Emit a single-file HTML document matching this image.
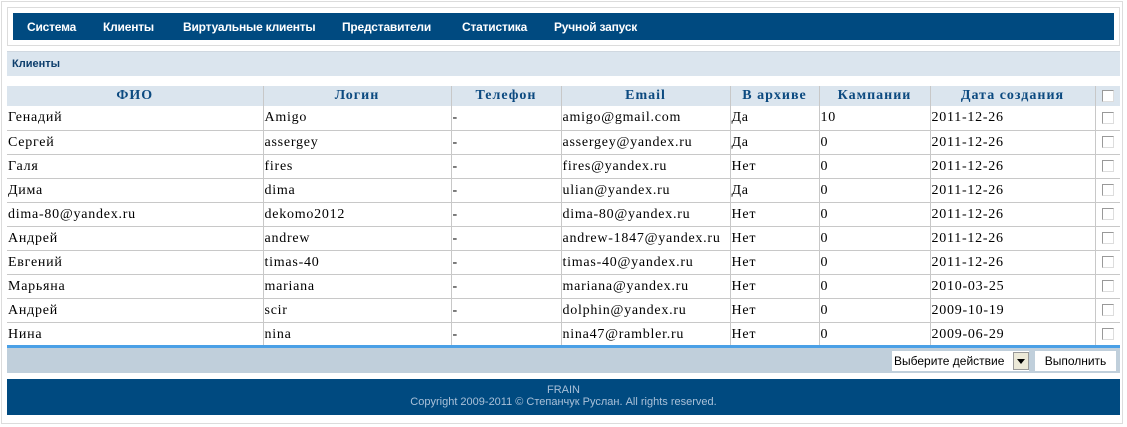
<!DOCTYPE html>
<html><head><meta charset="utf-8"><style>
*{margin:0;padding:0;box-sizing:border-box}
body{width:1127px;height:427px;background:#fff;position:relative;overflow:hidden;font-family:"Liberation Serif",serif}
.outer{position:absolute;left:1px;top:1px;width:1122px;height:423px;border:1px solid #dcdcdc}
.navbox{position:absolute;left:7px;top:7px;width:1113px;height:39px;border:1px solid #dcdcdc;background:#fff}
.nav{position:absolute;left:13px;top:13px;width:1101px;height:27px;background:#004a80}
.nav span{position:absolute;top:7px;color:#fff;font:bold 12px "Liberation Sans",sans-serif;letter-spacing:-0.2px}
.sec{position:absolute;left:7px;top:51px;width:1113px;height:25px;background:#dbe5ee;border-top:1px solid #d0d8e0}
.sec b{position:absolute;left:5px;top:6px;font:bold 11px "Liberation Sans",sans-serif;color:#0c3d6b}
table{position:absolute;left:7px;top:86px;width:1113px;border-collapse:collapse;table-layout:fixed}
th{height:20px;background:#dbe5ee;color:#0c4a80;font-weight:bold;font-size:14px;letter-spacing:1px;border-left:1px solid #c8c8c8;text-align:center;padding:0}
td{height:24px;font-size:14px;letter-spacing:0.75px;border:1px solid #c8c8c8;border-top:none;padding:1px 1px 0;white-space:nowrap;overflow:hidden;color:#000}
th:first-child,td:first-child{border-left:none}
td:last-child{border-right:none}
.cb{display:inline-block;width:12px;height:12px;border:1px solid #999;border-right-color:#ddd;border-bottom-color:#ddd;background:#fff;vertical-align:middle}
.blue{position:absolute;left:7px;top:345px;width:1113px;height:3px;background:#4aa0e6}
.gray{position:absolute;left:7px;top:348px;width:1113px;height:25px;background:#c0cfdb}
.sel{position:absolute;left:892px;top:351px;width:137px;height:20px;background:#fff;font:12px "Liberation Sans",sans-serif;padding:3px 0 0 2px}
.arr{position:absolute;right:0;top:1px;width:16px;height:18px;background:#ece9d8;border:1px solid #999}
.arr:after{content:"";position:absolute;left:3px;top:6px;border-left:4px solid transparent;border-right:4px solid transparent;border-top:5px solid #000}
.btn{position:absolute;left:1035px;top:351px;width:81px;height:20px;background:#fff;font:12px "Liberation Sans",sans-serif;text-align:center;padding-top:3px}
.foot{position:absolute;left:7px;top:379px;width:1113px;height:36px;background:#004a80;color:#a9c0d8;font:11px "Liberation Sans",sans-serif;text-align:center;line-height:12px;padding-top:5px}
</style></head><body>
<div class="outer"></div>
<div class="navbox"></div>
<div class="nav">
<span style="left:14px">Система</span><span style="left:90px">Клиенты</span><span style="left:170px">Виртуальные клиенты</span><span style="left:329px">Представители</span><span style="left:449px">Статистика</span><span style="left:541px">Ручной запуск</span>
</div>
<div class="sec"><b>Клиенты</b></div>
<table>
<colgroup><col style="width:256px"><col style="width:188px"><col style="width:110px"><col style="width:169px"><col style="width:89px"><col style="width:111px"><col style="width:165px"><col style="width:25px"></colgroup>
<tr><th>ФИО</th><th>Логин</th><th>Телефон</th><th>Email</th><th>В архиве</th><th>Кампании</th><th>Дата создания</th><th><span class="cb"></span></th></tr>
<tr><td>Генадий</td><td>Amigo</td><td>-</td><td>amigo@gmail.com</td><td>Да</td><td>10</td><td>2011-12-26</td><td style="text-align:center"><span class="cb"></span></td></tr>
<tr><td>Сергей</td><td>assergey</td><td>-</td><td>assergey@yandex.ru</td><td>Да</td><td>0</td><td>2011-12-26</td><td style="text-align:center"><span class="cb"></span></td></tr>
<tr><td>Галя</td><td>fires</td><td>-</td><td>fires@yandex.ru</td><td>Нет</td><td>0</td><td>2011-12-26</td><td style="text-align:center"><span class="cb"></span></td></tr>
<tr><td>Дима</td><td>dima</td><td>-</td><td>ulian@yandex.ru</td><td>Да</td><td>0</td><td>2011-12-26</td><td style="text-align:center"><span class="cb"></span></td></tr>
<tr><td>dima-80@yandex.ru</td><td>dekomo2012</td><td>-</td><td>dima-80@yandex.ru</td><td>Нет</td><td>0</td><td>2011-12-26</td><td style="text-align:center"><span class="cb"></span></td></tr>
<tr><td>Андрей</td><td>andrew</td><td>-</td><td>andrew-1847@yandex.ru</td><td>Нет</td><td>0</td><td>2011-12-26</td><td style="text-align:center"><span class="cb"></span></td></tr>
<tr><td>Евгений</td><td>timas-40</td><td>-</td><td>timas-40@yandex.ru</td><td>Нет</td><td>0</td><td>2011-12-26</td><td style="text-align:center"><span class="cb"></span></td></tr>
<tr><td>Марьяна</td><td>mariana</td><td>-</td><td>mariana@yandex.ru</td><td>Нет</td><td>0</td><td>2010-03-25</td><td style="text-align:center"><span class="cb"></span></td></tr>
<tr><td>Андрей</td><td>scir</td><td>-</td><td>dolphin@yandex.ru</td><td>Нет</td><td>0</td><td>2009-10-19</td><td style="text-align:center"><span class="cb"></span></td></tr>
<tr><td>Нина</td><td>nina</td><td>-</td><td>nina47@rambler.ru</td><td>Нет</td><td>0</td><td>2009-06-29</td><td style="text-align:center"><span class="cb"></span></td></tr>
</table>
<div class="blue"></div>
<div class="gray"></div>
<div class="sel">Выберите действие<div class="arr"></div></div>
<div class="btn">Выполнить</div>
<div class="foot">FRAIN<br>Copyright 2009-2011 © Степанчук Руслан. All rights reserved.</div>
</body></html>
